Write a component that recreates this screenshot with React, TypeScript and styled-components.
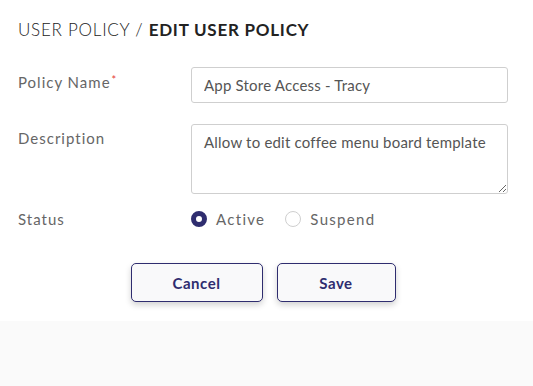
import React from "react";
import styled, { createGlobalStyle } from "styled-components";

const Global = createGlobalStyle`
  html, body { margin: 0; padding: 0; background: #ffffff; }
  body { font-family: Lato, "Open Sans", sans-serif; }
  * { box-sizing: border-box; }
`;

const Page = styled.div`
  width: 533px;
  height: 386px;
  display: flex;
  flex-direction: column;
  background: #ffffff;
`;

const Content = styled.div`
  padding: 20px 25px 0 18px;
  display: flex;
  flex-direction: column;
`;

const Title = styled.h1`
  margin: 0;
  font-size: 17px;
  line-height: 20px;
  letter-spacing: 0.75px;
  color: #222;
  font-weight: 300;
  white-space: nowrap;
`;

const TitleStrong = styled.span`
  font-weight: 700;
`;

const Form = styled.div`
  margin-top: 27px;
  display: grid;
  grid-template-columns: 173px 317px;
  row-gap: 21px;
`;

const Label = styled.div<{ $mt: number }>`
  margin-top: ${(p) => p.$mt}px;
  font-size: 15px;
  line-height: 18px;
  letter-spacing: 1px;
  color: #666;
  font-weight: 400;
`;

const Required = styled.sup`
  color: #e53935;
  font-size: 11px;
  vertical-align: top;
  position: relative;
  top: -2px;
  margin-left: 1px;
`;

const Input = styled.input`
  width: 317px;
  height: 36px;
  border: 1px solid #cfcfcf;
  border-radius: 3px;
  padding: 0 12px;
  font-family: inherit;
  font-size: 15px;
  color: #555;
  letter-spacing: 0.2px;
  outline: none;
`;

const TextArea = styled.textarea`
  width: 317px;
  height: 70px;
  border: 1px solid #cfcfcf;
  border-radius: 3px;
  padding: 8px 12px;
  font-family: inherit;
  font-size: 15px;
  color: #555;
  letter-spacing: 0.2px;
  outline: none;
  resize: both;
  display: block;
`;

const RadioGroup = styled.div`
  display: flex;
  align-items: center;
  gap: 20px;
  height: 18px;
  margin-top: -5px;
`;

const RadioOption = styled.label`
  display: flex;
  align-items: center;
  gap: 9px;
  font-size: 15px;
  color: #666;
  letter-spacing: 1.3px;
  font-weight: 400;
`;

const RadioDot = styled.span<{ $checked?: boolean }>`
  width: 16px;
  height: 16px;
  border-radius: 50%;
  border: ${(p) => (p.$checked ? "5px solid #2f2d6f" : "1px solid #cfcfcf")};
  background: #fff;
  display: inline-block;
`;

const Actions = styled.div`
  display: flex;
  justify-content: center;
  gap: 14px;
  margin-top: 35px;
`;

const Button = styled.button<{ $w: number }>`
  width: ${(p) => p.$w}px;
  height: 39px;
  border: 1px solid #2f2d6f;
  border-radius: 5px;
  background: #f9f9fa;
  color: #2f2d6f;
  font-family: inherit;
  font-size: 15px;
  font-weight: 700;
  letter-spacing: 0.5px;
  box-shadow: 0 3px 6px rgba(0, 0, 0, 0.18);
`;

const Footer = styled.div`
  margin-top: 19px;
  flex: 1;
  background: #fafafa;
`;

export default function App() {
  return (
    <>
      <Global />
      <Page>
        <Content>
          <Title>
            USER POLICY / <TitleStrong>EDIT USER POLICY</TitleStrong>
          </Title>
          <Form>
            <Label $mt={6}>
              Policy Name<Required>*</Required>
            </Label>
            <Input defaultValue="App Store Access - Tracy" />
            <Label $mt={5}>Description</Label>
            <TextArea defaultValue="Allow to edit coffee menu board template" />
            <Label $mt={-5}>Status</Label>
            <RadioGroup>
              <RadioOption>
                <RadioDot $checked />
                Active
              </RadioOption>
              <RadioOption>
                <RadioDot />
                Suspend
              </RadioOption>
            </RadioGroup>
          </Form>
          <Actions>
            <Button $w={132}>Cancel</Button>
            <Button $w={119}>Save</Button>
          </Actions>
        </Content>
        <Footer />
      </Page>
    </>
  );
}
